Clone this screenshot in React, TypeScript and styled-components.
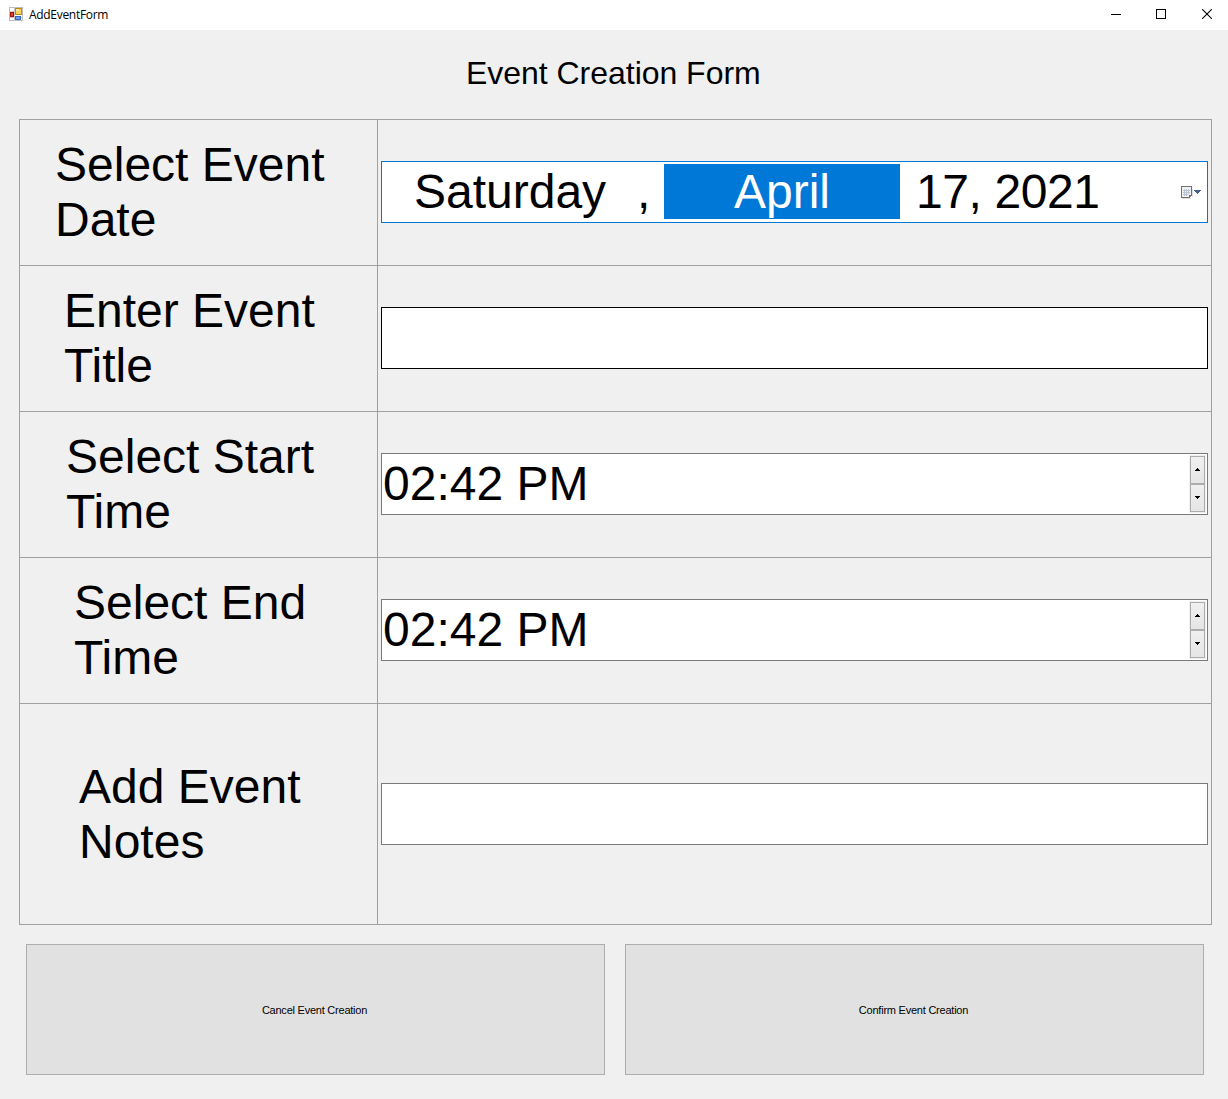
import React from "react";
import styled, { createGlobalStyle } from "styled-components";

const Global = createGlobalStyle`
  * { box-sizing: border-box; }
  html, body { margin: 0; padding: 0; background: #f0f0f0; }
`;

const Window = styled.div`
  width: 1228px;
  height: 1099px;
  display: flex;
  flex-direction: column;
  background: #f0f0f0;
  color: #000;
  font-family: "Liberation Sans", Arial, sans-serif;
  overflow: hidden;
`;

const TitleBar = styled.header`
  height: 30px;
  flex: none;
  display: flex;
  align-items: center;
  justify-content: space-between;
  background: #fff;
`;

const Caption = styled.div`
  display: flex;
  align-items: center;
  gap: 4px;
  padding-left: 9px;
  height: 30px;
  svg { display: block; margin-top: -2px; }
`;

const CaptionText = styled.span`
  font: 12px/16px "Open Sans", "Noto Sans", sans-serif;
  letter-spacing: -0.3px;
  white-space: nowrap;
`;

const WindowControls = styled.div`
  display: flex;
  gap: 35px;
  padding: 0 16px 2px 0;
  svg { display: block; }
`;

const Heading = styled.h1`
  margin: 0;
  height: 89px;
  padding-top: 25px;
  padding-left: 466px;
  font-size: 32px;
  font-weight: 400;
  line-height: 37px;
  letter-spacing: -0.03px;
  white-space: nowrap;
`;

const Table = styled.div`
  margin-left: 19px;
  width: 1193px;
  flex: none;
  display: grid;
  grid-template-columns: 357px 833px;
  grid-template-rows: repeat(4, 145px) 220px;
  gap: 1px;
  border: 1px solid #a0a0a0;
  background: #a0a0a0;
`;

const LabelCell = styled.div<{ $indent: number }>`
  display: flex;
  align-items: center;
  padding-left: ${(p) => p.$indent}px;
  padding-bottom: 1px;
  background: #f0f0f0;
  &:nth-last-child(2) { padding-bottom: 0; }
`;

const Label = styled.label`
  font-size: 48px;
  line-height: 55px;
  white-space: nowrap;
`;

const FieldCell = styled.div`
  display: flex;
  align-items: center;
  padding: 0 3px 1px;
  background: #f0f0f0;
`;

const Field = styled.div<{ $border: string }>`
  width: 827px;
  height: 62px;
  display: flex;
  align-items: center;
  border: 1px solid ${(p) => p.$border};
  background: #fff;
  font-size: 48px;
  line-height: 55px;
  white-space: pre;
`;

const Part = styled.span`
  margin-top: -1px;
`;

const Weekday = styled(Part)`
  width: 225px;
  padding-left: 32px;
`;

const Comma = styled(Part)`
  width: 57px;
  padding-left: 30px;
`;

const Month = styled(Part)`
  width: 236px;
  height: 55px;
  background: #0078d7;
  color: #fff;
  text-align: center;
`;

const DayYear = styled(Part)`
  flex: 1;
  padding-left: 16px;
  letter-spacing: -0.4px;
`;

const PickerIcon = styled.svg`
  display: block;
  margin: 2px 5px 0 0;
`;

const TimeText = styled(Part)`
  flex: 1;
  padding-left: 1px;
`;

const Spinner = styled.div`
  width: 17px;
  height: 58px;
  margin-right: 1px;
  padding: 1px;
  display: flex;
  flex-direction: column;
  background: #f0f0f0;
`;

const SpinButton = styled.button`
  flex: 1;
  width: 15px;
  padding: 0 0 2px;
  display: flex;
  align-items: center;
  justify-content: center;
  border: 1px solid #acacac;
  background: linear-gradient(#f0f0f0, #e5e5e5);
  svg { display: block; }
`;

const Actions = styled.div`
  display: flex;
  gap: 20px;
  padding: 19px 0 0 26px;
`;

const Action = styled.button`
  width: 579px;
  height: 131px;
  padding: 0 2px 0 0;
  border: 1px solid #adadad;
  background: #e1e1e1;
  color: #000;
  font: 11px/14px "Liberation Sans", Arial, sans-serif;
  letter-spacing: -0.23px;
`;

function AppIcon() {
  return (
    <svg width="16" height="16" viewBox="0 0 16 16" shapeRendering="crispEdges">
      <rect x="0.5" y="1.5" width="13" height="13" fill="#fff" stroke="#bcbcbc" />
      <path d="M5 1v14M0 5h5M0 11h14" stroke="#c8c8c8" fill="none" />
      <rect x="1.5" y="6.5" width="3" height="4" fill="#d8402c" stroke="#a11208" />
      <rect x="6.5" y="2.5" width="6" height="6" fill="#fbd158" stroke="#c08a10" />
      <rect x="7" y="3" width="3" height="2" fill="#ffe89a" />
      <rect x="6.5" y="10.5" width="5" height="3" fill="#6d9df0" stroke="#3668c8" />
    </svg>
  );
}

function Arrow({ down }: { down?: boolean }) {
  return (
    <svg width="5" height="3" viewBox="0 0 5 3" shapeRendering="crispEdges">
      <path d={down ? "M0 0h5v1H4v1H3v1H2V2H1V1H0z" : "M2 0h1v1h1v1h1v1H0V2h1V1h1z"} fill="#000" />
    </svg>
  );
}

function CalendarIcon() {
  return (
    <PickerIcon width="22" height="14" viewBox="0 0 22 14" shapeRendering="crispEdges">
      <path d="M2 12h9v1H2zM12 3h1v8h-1z" fill="#dedede" />
      <path d="M1 0h10v10l-2 2H1z" fill="#edf2f8" />
      <path d="M1.5 0.5h10v9h-2v2h-8z" fill="none" stroke="#7b6c69" />
      <path d="M10 10h1v1h-1z" fill="#8b7d7a" />
      <path d="M3 3h7v5H8v2H3z" fill="#b9c3d2" />
      <path
        d="M3 3h1v1H3zM5 3h1v1H5zM7 3h1v1H7zM9 3h1v1H9zM3 5h1v1H3zM5 5h1v1H5zM7 5h1v1H7zM9 5h1v1H9zM3 7h1v1H3zM5 7h1v1H5zM7 7h1v1H7zM9 7h1v1H9zM3 9h1v1H3zM5 9h1v1H5zM7 9h1v1H7z"
        fill="#eef3f9"
      />
      <path d="M14 4h7v1h-1v1h-1v1h-1v1h-1V7h-1V6h-1V5h-1z" fill="#46618f" />
    </PickerIcon>
  );
}

function TimeField() {
  return (
    <Field $border="#7a7a7a">
      <TimeText>02:42 PM</TimeText>
      <Spinner>
        <SpinButton aria-label="Increase"><Arrow /></SpinButton>
        <SpinButton aria-label="Decrease"><Arrow down /></SpinButton>
      </Spinner>
    </Field>
  );
}

export default function App() {
  return (
    <Window>
      <Global />
      <TitleBar>
        <Caption>
          <AppIcon />
          <CaptionText>AddEventForm</CaptionText>
        </Caption>
        <WindowControls>
          <svg width="10" height="10" shapeRendering="crispEdges"><path d="M0 5.5h10" stroke="#000" /></svg>
          <svg width="11" height="10" shapeRendering="crispEdges"><rect x="0.5" y="0.5" width="9" height="9" fill="none" stroke="#000" /></svg>
          <svg width="10" height="10"><path d="M0.2 0.2l9.6 9.6M9.8 0.2L0.2 9.8" stroke="#000" strokeWidth="1.1" /></svg>
        </WindowControls>
      </TitleBar>
      <Heading>Event Creation Form</Heading>
      <Table>
        <LabelCell $indent={35}><Label>Select Event<br />Date</Label></LabelCell>
        <FieldCell>
          <Field $border="#0078d7">
            <Weekday>Saturday</Weekday>
            <Comma>,</Comma>
            <Month>April</Month>
            <DayYear>17, 2021</DayYear>
            <CalendarIcon />
          </Field>
        </FieldCell>
        <LabelCell $indent={44}><Label>Enter Event<br />Title</Label></LabelCell>
        <FieldCell><Field $border="#000" /></FieldCell>
        <LabelCell $indent={46}><Label>Select Start<br />Time</Label></LabelCell>
        <FieldCell><TimeField /></FieldCell>
        <LabelCell $indent={54}><Label>Select End<br />Time</Label></LabelCell>
        <FieldCell><TimeField /></FieldCell>
        <LabelCell $indent={59}><Label>Add Event<br />Notes</Label></LabelCell>
        <FieldCell><Field $border="#7a7a7a" /></FieldCell>
      </Table>
      <Actions>
        <Action>Cancel Event Creation</Action>
        <Action>Confirm Event Creation</Action>
      </Actions>
    </Window>
  );
}
